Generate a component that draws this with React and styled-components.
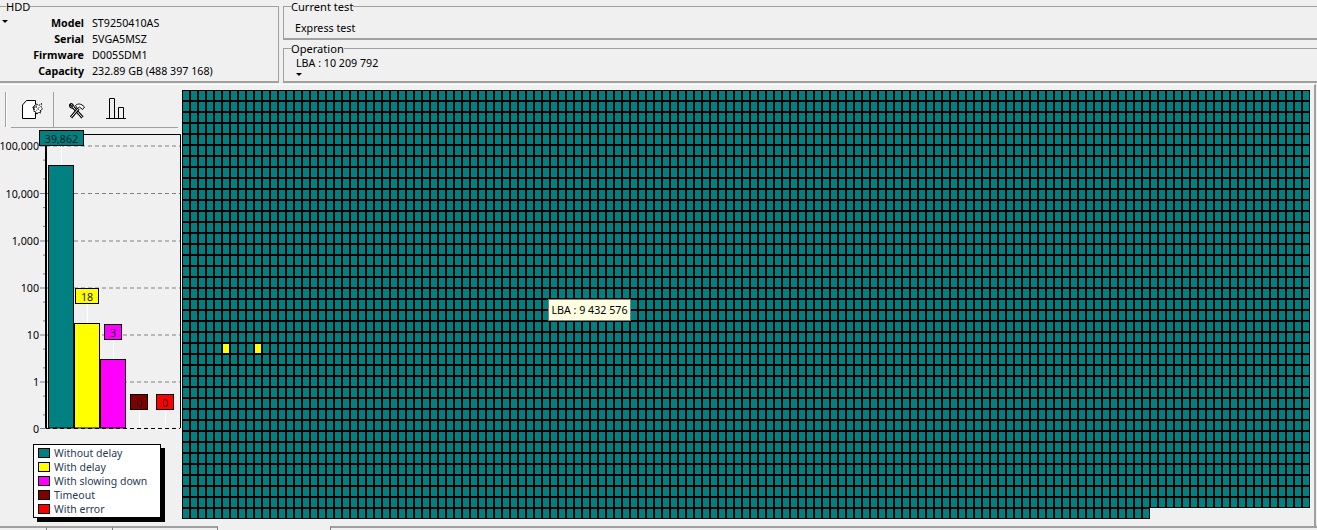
import React from 'react';
import styled, { createGlobalStyle } from 'styled-components';

const COLS = 141;
const TOTAL_CELLS = 38 * COLS + 121;
const SLOW_CELLS = [23 * COLS + 5, 23 * COLS + 9];
const UI_FONT = '"Noto Sans", "Liberation Sans", sans-serif';

const driveInfo = [
    ['Model', 'ST9250410AS'],
    ['Serial', '5VGA5MSZ'],
    ['Firmware', 'D005SDM1'],
    ['Capacity', '232.89 GB (488 397 168)'],
];

const legendItems = [
    ['Without delay', '#008080'],
    ['With delay', '#ffff00'],
    ['With slowing down', '#ff00ff'],
    ['Timeout', '#800000'],
    ['With error', '#ff0000'],
];

const axisLabels = [
    ['100,000', 146],
    ['10,000', 193.5],
    ['1,000', 241],
    ['100', 288],
    ['10', 335],
    ['1', 382],
];

const bars = [
    { x: 48.5, w: 25, y: 165.5, fill: '#008080' },
    { x: 74.5, w: 25, y: 323.5, fill: '#ffff00' },
    { x: 100.5, w: 25, y: 359.5, fill: '#ff00ff' },
];

const valueBoxes = [
    { label: '39,862', x: 39.5, w: 44, y: 130.5, fill: '#008080', lineX: 61.5, lineTo: 165 },
    { label: '18', x: 75.5, w: 23, y: 288.5, fill: '#ffff00', lineX: 87.5, lineTo: 323 },
    { label: '3', x: 104.5, w: 17, y: 324.5, fill: '#ff00ff', lineX: 113.5, lineTo: 359 },
    { label: '0', x: 130.5, w: 17, y: 394.5, fill: '#800000', lineX: 139.5, lineTo: 428 },
    { label: '0', x: 156.5, w: 17, y: 394.5, fill: '#ff0000', lineX: 165.5, lineTo: 428 },
];

const minorTicks = [];
axisLabels.forEach(([, y]) => {
    [0.3, 0.7].forEach(f => {
        if (y + 47 * f < 428) minorTicks.push(y + 47 * f);
    });
});

const App = () => {
    return (
        <Page>
            <GlobalStyle />
            <TopBar>
                <HddGroup>
                    <GroupTitle>HDD</GroupTitle>
                    <HddCaret />
                    <InfoGrid>
                        {driveInfo.map(([label, value]) => (
                            <React.Fragment key={label}>
                                <InfoLabel>{label}</InfoLabel>
                                <span>{value}</span>
                            </React.Fragment>
                        ))}
                    </InfoGrid>
                </HddGroup>
                <StatusColumn>
                    <CurrentGroup>
                        <GroupTitle>Current test</GroupTitle>
                        <StatusText>Express test</StatusText>
                    </CurrentGroup>
                    <OperationGroup>
                        <GroupTitle>Operation</GroupTitle>
                        <OperationText>LBA : 10 209 792</OperationText>
                        <OperationCaret />
                    </OperationGroup>
                </StatusColumn>
            </TopBar>

            <MainPanel>
                <LeftPanel>
                    <Toolbar>
                        <Handle />
                        <PageButton>
                            <svg width="21" height="19" viewBox="0 0 21 19" fill="none" stroke="#000" strokeWidth="1">
                                <path d="M0.5 5L4.5 0.5H13.5V4.5L11 7.5L12 10L13.5 12.5V18.5H0.5Z" fill="#fff" />
                                <path d="M11 7L14 7.5L14.5 4L17 5.5L19.5 3.5L19 7L20.5 9L18.5 10L19 13L16.5 12L15 14.5L13.5 11.5L11.5 11L12.5 9Z" fill="#fff" strokeDasharray="2 1" />
                                <path d="M14.5 7.5L17.5 10.5M17.5 7L14.5 10.5" strokeDasharray="1 1" />
                            </svg>
                        </PageButton>
                        <Separator />
                        <ToolsButton>
                            <svg width="16" height="16" viewBox="0 0 16 16" fill="none" stroke="#000">
                                <path d="M1 1.5L3 3.5L4.5 2.5L3 0.8C1.5 0.2 0.2 1.5 0.6 3C1 4.5 2.5 5.5 4 5" strokeWidth="1.1" fill="#fff" />
                                <path d="M4 4L13.5 14.5" strokeWidth="3" />
                                <path d="M4 4L13.5 14.5" strokeWidth="1" stroke="#fff" />
                                <path d="M2 14.5L9.5 5.5" strokeWidth="3" />
                                <path d="M2 14.5L9.5 5.5" strokeWidth="1" stroke="#fff" />
                                <path d="M6.5 2.5C9 0.2 12 0.5 15.5 4L13.5 6.5L10.5 4L8.5 5.5Z" fill="#fff" strokeWidth="1" />
                            </svg>
                        </ToolsButton>
                        <ChartButton>
                            <svg width="20" height="21" viewBox="0 0 20 21" fill="none" stroke="#000">
                                <path d="M0 20.5H20" />
                                <path d="M3.5 20V0.5H8.5V20" />
                                <path d="M12.5 20V9.5H17.5V20" />
                            </svg>
                        </ChartButton>
                    </Toolbar>

                    <ChartSvg viewBox="0 128 182 312">
                        <path d="M46 134.5H180.5V428" stroke="#000" fill="none" />
                        {axisLabels.map(([label, y]) => (
                            <GridLine key={label} x1="46" x2="180" y1={y} y2={y} />
                        ))}
                        <line x1="46" x2="46" y1="146" y2="428" stroke="#000" strokeWidth="2" />
                        <BaseLine x1="46" x2="180" y1="428.5" y2="428.5" />
                        <line x1="40" x2="46" y1="428.5" y2="428.5" stroke="#808080" />
                        {axisLabels.map(([label, y]) => (
                            <g key={label}>
                                <line x1="40" x2="45" y1={y} y2={y} stroke="#808080" />
                                <AxisText x="39" y={y + 4}>{label}</AxisText>
                            </g>
                        ))}
                        <AxisText x="39" y="433">0</AxisText>
                        {minorTicks.map(y => (
                            <line key={y} x1="43" x2="45" y1={y} y2={y} stroke="#808080" />
                        ))}
                        {bars.map(bar => (
                            <rect key={bar.fill} x={bar.x} y={bar.y} width={bar.w} height={428 - bar.y} fill={bar.fill} stroke="#000" />
                        ))}
                        {valueBoxes.map(box => (
                            <g key={box.fill}>
                                <line x1={box.lineX} x2={box.lineX} y1={box.y + 15} y2={box.lineTo} stroke="#fff" />
                                <rect x={box.x} y={box.y} width={box.w} height="15" fill={box.fill} stroke="#000" />
                                <ValueText x={box.x + box.w / 2} y={box.y + 12}>{box.label}</ValueText>
                            </g>
                        ))}
                    </ChartSvg>

                    <LegendBox>
                        {legendItems.map(([label, color]) => (
                            <LegendRow key={label}>
                                <Swatch $color={color} />
                                {label}
                            </LegendRow>
                        ))}
                    </LegendBox>
                </LeftPanel>

                <MapArea>
                    <BlockMap>
                        {Array.from({ length: TOTAL_CELLS }, (_, i) => (
                            <Block key={i} $slow={SLOW_CELLS.includes(i)} />
                        ))}
                    </BlockMap>
                    <Tooltip>LBA : 9 432 576</Tooltip>
                </MapArea>
            </MainPanel>

            <BottomTabs>
                <Tab $width={47} />
                <Tab $width={66} />
                <Tab $width={105} />
                <TabGap />
                <TabRest />
            </BottomTabs>
        </Page>
    );
};

export default App;

const GlobalStyle = createGlobalStyle`
    html, body {
        margin: 0;
        padding: 0;
        background: #f0f0f0;
        overflow: hidden;
    }
`;

const Page = styled.div`
    width: 1317px;
    height: 530px;
    display: flex;
    flex-direction: column;
    overflow: hidden;
    background: #f0f0f0;
    color: #000;
    font-family: ${UI_FONT};
    font-size: 10.7px;
    line-height: 16px;
`;

const TopBar = styled.div`
    display: flex;
    gap: 4px;
    height: 83px;
    flex: none;
`;

const Group = styled.fieldset`
    position: relative;
    margin: 0;
    padding: 0;
    min-width: 0;
    box-sizing: border-box;
    border: 1px solid #a0a0a0;
    border-bottom-width: 2px;
`;

const GroupTitle = styled.legend`
    padding: 0;
    margin-left: 7px;
    font-size: 11.1px;
    line-height: 13px;
`;

const HddGroup = styled(Group)`
    width: 279px;
    height: 83px;
    border-left: none;

    ${GroupTitle} {
        margin-left: 6px;
    }
`;

const caret = `
    position: absolute;
    width: 0;
    height: 0;
    border-left: 3px solid transparent;
    border-right: 3px solid transparent;
    border-top: 3px solid #000;
`;

const HddCaret = styled.i`
    ${caret}
    left: 2px;
    top: 7px;
`;

const InfoGrid = styled.div`
    display: grid;
    grid-template-columns: 84px auto;
    justify-content: start;
    column-gap: 8px;
    padding-top: 2px;
`;

const InfoLabel = styled.span`
    font-weight: 700;
    text-align: right;
`;

const StatusColumn = styled.div`
    flex: 1;
    display: flex;
    flex-direction: column;
    gap: 2px;
`;

const CurrentGroup = styled(Group)`
    height: 40px;
    border-right: none;
`;

const OperationGroup = styled(Group)`
    height: 41px;
    border-right: none;
`;

const StatusText = styled.div`
    padding: 7px 0 0 11px;
`;

const OperationText = styled.div`
    padding-left: 12px;
`;

const OperationCaret = styled.i`
    ${caret}
    left: 12px;
    top: 18px;
`;

const MainPanel = styled.div`
    flex: none;
    height: 442px;
    margin: 1px 1px 0 0;
    display: flex;
    box-sizing: border-box;
    border-top: 1px solid #fff;
    border-right: 2px solid #a0a0a0;
`;

const LeftPanel = styled.div`
    flex: none;
    width: 182px;
    display: flex;
    flex-direction: column;
`;

const Toolbar = styled.div`
    position: relative;
    height: 43px;
    flex: none;
    box-sizing: border-box;
    margin-right: 4px;
    margin-left: 11px;
    border-bottom: 1px solid #a0a0a0;
    display: flex;
`;

const Handle = styled.div`
    position: absolute;
    left: -6px;
    top: 7px;
    height: 35px;
    width: 1px;
    background: #a0a0a0;
    box-shadow: 1px 0 0 #fff;
`;

const ToolButton = styled.div`
    display: flex;
    flex: none;
`;

const PageButton = styled(ToolButton)`
    padding: 15px 0 0 11px;
`;

const Separator = styled.div`
    width: 1px;
    height: 35px;
    margin: 7px 0 0 10px;
    background: #a0a0a0;
`;

const ToolsButton = styled(ToolButton)`
    padding: 18px 0 0 15px;
`;

const ChartButton = styled(ToolButton)`
    padding: 13px 0 0 21px;
`;

const ChartSvg = styled.svg`
    display: block;
    flex: none;
    width: 182px;
    height: 312px;
`;

const GridLine = styled.line`
    stroke: #808080;
    stroke-dasharray: 4 3;
`;

const BaseLine = styled.line`
    stroke: #000;
    stroke-dasharray: 4 3;
`;

const AxisText = styled.text`
    font-family: ${UI_FONT};
    font-size: 10.7px;
    text-anchor: end;
`;

const ValueText = styled.text`
    font-family: ${UI_FONT};
    font-size: 10.7px;
    text-anchor: middle;
    fill: #1a1a1a;
`;

const LegendBox = styled.div`
    margin: 4px 0 0 33px;
    width: 128px;
    height: 74px;
    box-sizing: border-box;
    padding: 1px 0 0 4px;
    background: #fff;
    border: 1px solid #000;
    box-shadow: 4px 4px 0 #000;
`;

const LegendRow = styled.div`
    display: flex;
    align-items: center;
    gap: 4px;
    height: 14px;
    font-size: 10.5px;
    color: #2a3a55;
`;

const Swatch = styled.span`
    flex: none;
    width: 10px;
    height: 8px;
    border: 1px solid #000;
    background: ${props => props.$color};
`;

const MapArea = styled.div`
    position: relative;
    flex: 1;
    padding-top: 5px;
`;

const BlockMap = styled.div`
    display: grid;
    grid-template-columns: repeat(${COLS}, 8px);
    grid-auto-rows: 11px;
`;

const Block = styled.div`
    box-sizing: border-box;
    border: 1px solid #000;
    background: ${props => (props.$slow ? '#ffff00' : '#008080')};
`;

const Tooltip = styled.div`
    position: absolute;
    left: 366px;
    top: 214px;
    width: 83px;
    height: 22px;
    box-sizing: border-box;
    text-align: center;
    white-space: nowrap;
    line-height: 20px;
    background: #ffffe1;
    border: 1px solid #808080;
`;

const BottomTabs = styled.div`
    flex: 1;
    display: flex;
`;

const Tab = styled.div`
    flex: none;
    width: ${props => props.$width}px;
    box-sizing: border-box;
    border-top: 2px solid #a0a0a0;
    border-right: 1px solid #808080;
`;

const TabGap = styled.div`
    flex: none;
    width: 112px;
`;

const TabRest = styled.div`
    flex: 1;
    border-top: 2px solid #a0a0a0;
    border-left: 1px solid #808080;
`;
